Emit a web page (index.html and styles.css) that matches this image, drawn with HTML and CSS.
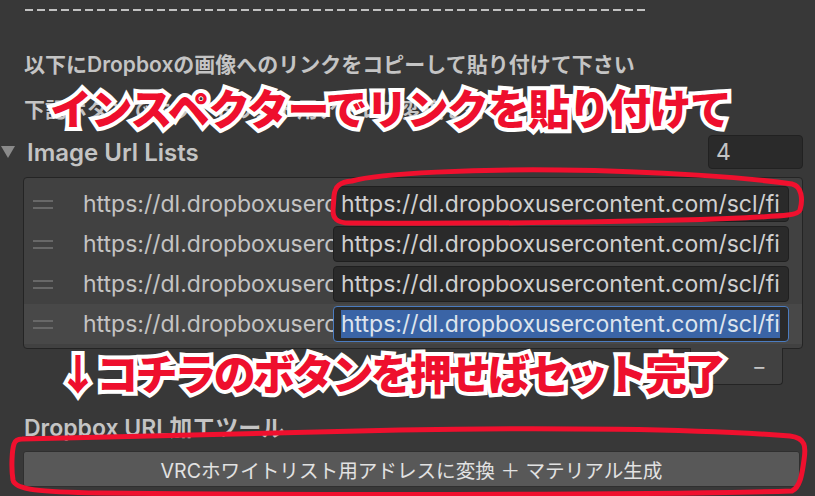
FILE: index.html
```html
<!DOCTYPE html>
<html lang="ja">
<head>
<meta charset="utf-8">
<title>Image Url Lists</title>
<link rel="stylesheet" href="styles.css">
</head>
<body>
<div class="inspector">
  <div class="dashes"></div>
  <p class="note">以下にDropboxの画像へのリンクをコピーして貼り付けて下さい</p>
  <p class="note">下記ボタンでホワイトリスト用アドレス変換を行って下さい</p>

  <div class="list-header">
    <span class="fold"></span>
    <span class="title">Image Url Lists</span>
    <div class="count">4</div>
  </div>

  <div class="list">
    <div class="row">
      <span class="handle"></span>
      <span class="key">https://dl.dropboxusercontent.com/scl/fi</span>
      <div class="field">https://dl.dropboxusercontent.com/scl/fi</div>
    </div>
    <div class="row">
      <span class="handle"></span>
      <span class="key">https://dl.dropboxusercontent.com/scl/fi</span>
      <div class="field">https://dl.dropboxusercontent.com/scl/fi</div>
    </div>
    <div class="row">
      <span class="handle"></span>
      <span class="key">https://dl.dropboxusercontent.com/scl/fi</span>
      <div class="field">https://dl.dropboxusercontent.com/scl/fi</div>
    </div>
    <div class="row selected">
      <span class="handle"></span>
      <span class="key">https://dl.dropboxusercontent.com/scl/fi</span>
      <div class="field focused"><span class="sel">https://dl.dropboxusercontent.com/scl/fi</span></div>
    </div>
  </div>
  <div class="list-footer">
    <span class="btn">+</span>
    <span class="btn">−</span>
  </div>

  <p class="section">Dropbox URL加工ツール</p>
  <button class="action">VRCホワイトリスト用アドレスに変換 ＋ マテリアル生成</button>

  <div class="callout callout-top">インスペクターでリンクを貼り付けて</div>
  <div class="callout callout-bottom">↓コチラのボタンを押せばセット完了</div>

  <svg class="marker" width="815" height="496" viewBox="0 0 815 496">
    <path d="M352 181 C380 173 480 169 560 170 C660 171 750 178 792 184 C802 186 803 200 800 210 C798 216 780 216 740 218 C640 222 480 224 350 223 C336 223 333 218 333 210 L334 196 C335 186 340 182 352 181 Z"/>
    <path d="M22 439 C100 436 250 433 400 430 C550 427 700 429 790 436 C806 438 806 447 804 460 C802 475 800 487 792 491 C700 494 400 496 100 493 C40 492 15 490 13 480 C11 468 12 450 14 444 C15 441 17 439 22 439 Z"/>
  </svg>
</div>
</body>
</html>
```

FILE: styles.css
```css
* {
  box-sizing: border-box;
}

html,
body {
  margin: 0;
}

body {
  width: 815px;
  height: 496px;
  overflow: hidden;
  background: #383838;
  color: #c4c4c4;
  font-family: Inter, "Noto Sans CJK JP", sans-serif;
}

.inspector {
  position: relative;
  height: 496px;
  padding: 9px 12px 0 23px;
}

/* separator drawn as a dashed rule */
.dashes {
  width: 622px;
  height: 2px;
  margin-left: 2px;
  background: repeating-linear-gradient(90deg, #c2c2c2 0 8px, transparent 8px 12px);
}

.note {
  margin: 39px 0 0 1px;
  font-size: 21px;
  line-height: 30px;
  font-weight: 600;
  white-space: nowrap;
}

.note + .note {
  margin-top: 15px;
}

/* foldout header with element count */
.list-header {
  display: flex;
  align-items: center;
  height: 34px;
  margin: 10px 0 0 -23px;
}

.fold {
  width: 0;
  height: 0;
  margin: 0 12px 0 1px;
  border-left: 7px solid transparent;
  border-right: 7px solid transparent;
  border-top: 12px solid #8a8a8a;
}

.title {
  flex: 1;
  font-size: 24px;
  font-weight: 600;
}

.count {
  width: 95px;
  height: 34px;
  padding-left: 7px;
  background: #2a2a2a;
  border: 1px solid #212121;
  border-radius: 4px;
  font-size: 23px;
  line-height: 32px;
}

/* reorderable list */
.list {
  margin-top: 8px;
  padding: 6px 0 4px;
  background: #414141;
  border: 1px solid #242424;
  border-radius: 4px;
}

.row {
  display: flex;
  align-items: center;
  height: 40px;
  padding-right: 13px;
}

.row.selected {
  background: #484848;
}

.handle {
  flex: none;
  width: 20px;
  height: 9px;
  margin-left: 9px;
  border-top: 2px solid #686868;
  border-bottom: 2px solid #686868;
}

.key {
  flex: none;
  width: 250px;
  margin-left: 30px;
  overflow: hidden;
  white-space: nowrap;
  font-size: 23px;
}

.field {
  flex: 1;
  height: 36px;
  padding-left: 7px;
  overflow: hidden;
  white-space: nowrap;
  background: #2a2a2a;
  border: 1px solid #1f1f1f;
  border-radius: 4px;
  font-size: 23px;
  line-height: 34px;
  color: #d0d0d0;
}

.field.focused {
  border-color: #4b7cc0;
}

.sel {
  background: #3a64a6;
  color: #dde4ee;
}

.list-footer {
  display: flex;
  justify-content: space-around;
  align-items: center;
  width: 93px;
  height: 37px;
  margin: -1px 20px 0 auto;
  background: #414141;
  border: 1px solid #242424;
  border-top: none;
  border-radius: 0 0 4px 4px;
}

.btn {
  font-size: 22px;
  color: #c4c4c4;
}

.section {
  margin: 28px 0 0 1px;
  font-size: 23px;
  line-height: 30px;
  font-weight: 600;
  white-space: nowrap;
}

.action {
  display: block;
  width: 777px;
  height: 36px;
  margin-top: 8px;
  background: #585858;
  border: 1px solid #2f2f2f;
  border-radius: 3px;
  color: #e2e2e2;
  font-family: inherit;
  font-size: 19.6px;
}

/* hand-written red notes on top of the inspector */
.callout {
  position: absolute;
  white-space: nowrap;
  font-family: "Noto Sans CJK JP", sans-serif;
  font-weight: 900;
  font-size: 42px;
  line-height: 1;
  letter-spacing: -1.5px;
  color: #ee0f2d;
  -webkit-text-stroke: 8px #ffffff;
  paint-order: stroke fill;
}

.callout-top {
  left: 50px;
  top: 86px;
}

.callout-bottom {
  left: 57px;
  top: 351px;
  letter-spacing: -2.8px;
}

.marker {
  position: absolute;
  left: 0;
  top: 0;
  pointer-events: none;
}

.marker path {
  fill: none;
  stroke: #f0102e;
  stroke-width: 5;
  stroke-linecap: round;
  stroke-linejoin: round;
}
```
